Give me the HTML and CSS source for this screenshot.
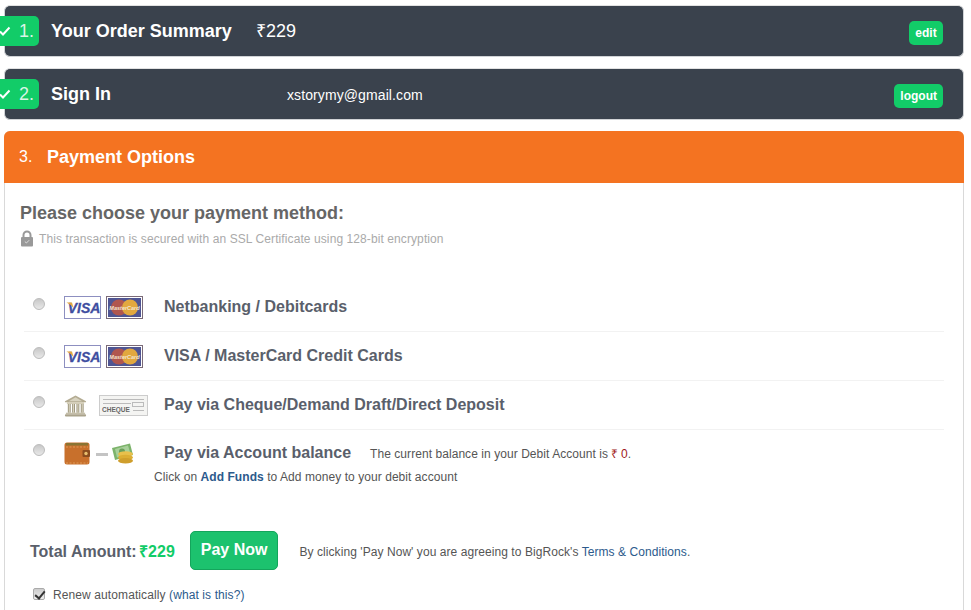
FILE: index.html
```html
<!DOCTYPE html>
<html lang="en">
<head>
  <meta charset="UTF-8">
  <title>Checkout</title>
  <link rel="stylesheet" href="styles.css">
</head>
<body>

  <div class="bar">
    <div class="step">
      <svg class="tick" width="12" height="10" viewBox="0 0 12 10"><path d="M1 5.5 L4 8.5 L10.5 1.5" fill="none" stroke="#fff" stroke-width="2"/></svg>
      <span>1.</span>
    </div>
    <div class="bar-title">Your Order Summary</div>
    <div class="bar-price">₹229</div>
    <a class="mini-btn">edit</a>
  </div>

  <div class="bar">
    <div class="step">
      <svg class="tick" width="12" height="10" viewBox="0 0 12 10"><path d="M1 5.5 L4 8.5 L10.5 1.5" fill="none" stroke="#fff" stroke-width="2"/></svg>
      <span>2.</span>
    </div>
    <div class="bar-title signin">Sign In</div>
    <div class="bar-mail">xstorymy@gmail.com</div>
    <a class="mini-btn">logout</a>
  </div>

  <div class="panel">
    <div class="panel-head">
      <span class="panel-num">3.</span>
      <span class="panel-title">Payment Options</span>
    </div>

    <div class="panel-body">
      <h2>Please choose your payment method:</h2>
      <div class="secure">
        <svg width="14" height="17" viewBox="0 0 14 17"><path d="M3.5 8 V5 a3.5 3.5 0 0 1 7 0 V8" fill="none" stroke="#999" stroke-width="2"/><rect x="1" y="7" width="12" height="9.5" rx="1" fill="#999"/><path d="M4.8 11.5 L6.4 13 L9.2 10.2" fill="none" stroke="#ddd" stroke-width="1"/></svg>
        <span>This transaction is secured with an SSL Certificate using 128-bit encryption</span>
      </div>

      <div class="methods">
        <div class="method">
          <input type="radio" name="pay" class="radio">
          <div class="logos">
            <svg class="card" width="37" height="23" viewBox="0 0 37 23"><rect x="0.5" y="0.5" width="36" height="22" fill="#fff" stroke="#8d8fc0"/><text x="20" y="17" text-anchor="middle" class="visa-text">VISA</text><path d="M2.500 6.500 H8 L9.500 12 Q7 8.500 2.500 6.500z" fill="#e2a83f"/></svg>
            <svg class="card" width="37" height="23" viewBox="0 0 37 23"><rect x="0.5" y="0.5" width="36" height="22" fill="#fff" stroke="#7a6a78"/><rect x="2" y="2" width="33" height="19" fill="#4f5593"/><circle cx="13" cy="11.5" r="8" fill="#b0564f"/><circle cx="24" cy="11.500" r="8" fill="#e2a83f"/><text x="18.5" y="13.500" text-anchor="middle" class="mc-text">MasterCard</text></svg>
          </div>
          <div class="method-name">Netbanking / Debitcards</div>
        </div>

        <div class="method">
          <input type="radio" name="pay" class="radio">
          <div class="logos">
            <svg class="card" width="37" height="23" viewBox="0 0 37 23"><rect x="0.5" y="0.5" width="36" height="22" fill="#fff" stroke="#8d8fc0"/><text x="20" y="17" text-anchor="middle" class="visa-text">VISA</text><path d="M2.500 6.500 H8 L9.500 12 Q7 8.500 2.500 6.500z" fill="#e2a83f"/></svg>
            <svg class="card" width="37" height="23" viewBox="0 0 37 23"><rect x="0.5" y="0.5" width="36" height="22" fill="#fff" stroke="#7a6a78"/><rect x="2" y="2" width="33" height="19" fill="#4f5593"/><circle cx="13" cy="11.5" r="8" fill="#b0564f"/><circle cx="24" cy="11.500" r="8" fill="#e2a83f"/><text x="18.5" y="13.500" text-anchor="middle" class="mc-text">MasterCard</text></svg>
          </div>
          <div class="method-name">VISA / MasterCard Credit Cards</div>
        </div>

        <div class="method">
          <input type="radio" name="pay" class="radio">
          <div class="logos">
            <svg width="23" height="23" viewBox="0 0 24 23">
              <path d="M12 1 L23 7 V8 H1 V7 Z" fill="#b3ab92"/>
              <path d="M12 3 L19 7 H5 Z" fill="#d8d3c0"/>
              <rect x="3" y="8" width="18" height="2" fill="#d2ccb6"/>
              <path d="M4 10h3v9H4z M8.5 10h3v9h-3z M13 10h3v9h-3z M17.500 10h3v9h-3z" fill="#9c957c"/>
              <path d="M5 10h1v9H5z M9.500 10h1v9h-1z M14 10h1v9h-1z M18.500 10h1v9h-1z" fill="#e0dbc8"/>
              <rect x="2" y="19" width="20" height="1.500" fill="#c4beA8"/>
              <rect x="1" y="20.500" width="22" height="2.500" rx="1" fill="#aaa38b"/>
            </svg>
            <span class="cheque">
              <i class="cheque-line l1"></i>
              <i class="cheque-line l2"></i>
              <i class="cheque-box"></i>
              <b>CHEQUE</b>
              <i class="cheque-line l3"></i>
            </span>
          </div>
          <div class="method-name">Pay via Cheque/Demand Draft/Direct Deposit</div>
        </div>

        <div class="method last">
          <input type="radio" name="pay" class="radio">
          <div class="logos">
            <svg width="26" height="23" viewBox="0 0 26 23">
              <rect x="0.500" y="0.500" width="25" height="22" rx="2.500" fill="#c8702c"/>
              <path d="M2 1 H24 V3.500 H2z" fill="#8a7433"/>
              <path d="M2 5 H24 M2 21 H24" stroke="#e8ac6c" stroke-dasharray="2 1.500" stroke-width="0.700"/>
              <rect x="18.500" y="8" width="7.500" height="7" rx="1" fill="#8a4c1e"/>
              <circle cx="22" cy="11.500" r="1.700" fill="#e8c070"/>
            </svg>
            <span class="dash"></span>
            <svg width="23" height="21" viewBox="0 0 23 21">
              <path d="M1 5 L19 0.500 L22 12 L4 17 Z" fill="#7cb36b"/>
              <path d="M4 6 L17 2.500 L19.500 11 L6 14.500 Z" fill="#a8d09a"/>
              <circle cx="11" cy="8.500" r="3" fill="#6a9f5a"/>
              <ellipse cx="14.500" cy="11" rx="7.500" ry="2.800" fill="#e8c04c"/>
              <ellipse cx="14.500" cy="14.500" rx="7.500" ry="2.800" fill="#dcae34"/>
              <ellipse cx="14.500" cy="17.800" rx="7.500" ry="2.800" fill="#cf9e2c"/>
            </svg>
          </div>
          <div class="method-name">Pay via Account balance</div>
          <div class="balance">The current balance in your Debit Account is <span class="rupee">₹ 0</span>.</div>
        </div>
        <div class="add-funds">Click on <a>Add Funds</a> to Add money to your debit account</div>
      </div>

      <div class="pay-row">
        <div class="total">Total Amount: <span>₹229</span></div>
        <a class="pay-btn">Pay Now</a>
        <div class="terms">By clicking 'Pay Now' you are agreeing to BigRock's <a>Terms &amp; Conditions</a>.</div>
      </div>

      <label class="renew">
        <input type="checkbox" checked>
        <span>Renew automatically <a>(what is this?)</a></span>
      </label>
    </div>
  </div>

</body>
</html>
```

FILE: styles.css
```css
* {
  box-sizing: border-box;
}
html, body {
  height: 610px;
  overflow: hidden;
}
body {
  margin: 0;
  padding: 5px 7px 0 4px;
  background: #fff;
  font-family: "Liberation Sans", Arial, sans-serif;
  color: #555;
}
a {
  color: #2c5a8c;
}
.bar {
  display: flex;
  align-items: center;
  height: 52px;
  margin-bottom: 11px;
  padding-right: 20px;
  background: #3a424d;
  border: 1px solid #d0d3d6;
  border-top-color: #e2e2e2;
  border-radius: 6px;
  color: #fff;
}
.step {
  display: flex;
  align-items: center;
  gap: 8px;
  width: 40px;
  height: 30px;
  margin-left: -6px;
  background: #12cc68;
  border-radius: 0 5px 5px 0;
  font-size: 18px;
  color: #d9f5e5;
  flex: none;
}
.tick {
  flex: none;
}
.bar-title {
  margin-left: 12px;
  width: 205px;
  font-size: 18px;
  font-weight: bold;
}
.bar-title.signin {
  width: 236px;
}
.bar-price {
  padding-bottom: 3px;
  font-size: 18px;
  flex: 1;
}
.bar-mail {
  padding-top: 2px;
  font-size: 14px;
  letter-spacing: .1px;
  flex: 1;
}
.mini-btn {
  margin-top: 4px;
  padding: 0 6px;
  min-width: 34px;
  background: #12cc68;
  border-radius: 5px;
  font-size: 12px;
  font-weight: bold;
  line-height: 24px;
  text-align: center;
  color: #fff;
}
.panel {
  height: 500px;
  border: 1px solid #d9d9d9;
  border-radius: 6px 6px 0 0;
  background: #fff;
}
.panel-head {
  display: flex;
  align-items: center;
  height: 52px;
  margin: -1px -1px 0;
  padding-left: 15px;
  background: #f47321;
  border-radius: 6px 6px 0 0;
  color: #fff;
}
.panel-num {
  width: 28px;
  font-size: 16px;
}
.panel-title {
  font-size: 18px;
  font-weight: bold;
}
.panel-body {
  padding: 20px 15px 0;
}
h2 {
  margin: 0;
  font-size: 18px;
  line-height: 20px;
  color: #666;
}
.secure {
  display: flex;
  align-items: center;
  gap: 5px;
  margin-top: 7px;
  font-size: 12px;
  letter-spacing: .09px;
  color: #aaa;
}
.methods {
  margin-top: 36px;
  padding: 0 4px;
}
.method {
  display: flex;
  align-items: center;
  height: 49px;
  border-bottom: 1px solid #f2f2f2;
}
.method.last {
  border-bottom: none;
  height: 46px;
}
.radio {
  appearance: none;
  flex: none;
  width: 12px;
  height: 12px;
  margin: -7px 0 0 9px;
  background: linear-gradient(#c8c8c8, #e8e8e8);
  border: 1px solid #bbb;
  border-radius: 50%;
}
.logos {
  display: flex;
  align-items: center;
  gap: 5px;
  width: 100px;
  margin-left: 19px;
  flex: none;
}
.card {
  flex: none;
}
.visa-text {
  font-family: "Liberation Sans", sans-serif;
  font-size: 14px;
  font-style: italic;
  font-weight: bold;
  fill: #3f4ea0;
  stroke: #3f4ea0;
  stroke-width: .3px;
}
.mc-text {
  font-family: "Liberation Sans", sans-serif;
  font-size: 5.5px;
  font-style: italic;
  font-weight: bold;
  fill: #f4e6d0;
}
.cheque {
  position: relative;
  display: block;
  flex: none;
  width: 49px;
  height: 21px;
  margin-left: 7px;
  background: #f4f4f2;
  border: 1px solid #ccc;
}
.cheque b {
  position: absolute;
  left: 2px;
  bottom: 1px;
  font-size: 6.5px;
  line-height: 8px;
  color: #666;
}
.cheque-line {
  position: absolute;
  height: 1px;
  background: #bbb;
}
.l1 {
  left: 3px;
  right: 3px;
  top: 3px;
}
.l2 {
  left: 3px;
  right: 16px;
  top: 7px;
}
.l3 {
  left: 33px;
  right: 3px;
  bottom: 4px;
}
.cheque-box {
  position: absolute;
  right: 3px;
  top: 6px;
  width: 12px;
  height: 5px;
  border: 1px solid #bbb;
}
.dash {
  flex: none;
  width: 12px;
  height: 3px;
  margin: 3px -2px 0 1px;
  background: #c4c4c4;
}
.method-name {
  font-size: 16px;
  font-weight: bold;
  color: #5a5f6b;
}
.balance {
  margin-left: 19px;
  font-size: 12px;
  letter-spacing: .06px;
  color: #555;
}
.rupee {
  margin-left: -1px;
  color: #a01818;
}
.add-funds {
  margin: -6px 0 0 130px;
  font-size: 12px;
  letter-spacing: .06px;
  color: #555;
}
.add-funds a {
  font-weight: bold;
}
.pay-row {
  display: flex;
  align-items: center;
  margin-top: 47px;
  padding-left: 10px;
}
.total {
  font-size: 16px;
  font-weight: bold;
  color: #5a5f6b;
}
.total span {
  margin-left: -2px;
  color: #12cc68;
}
.pay-btn {
  margin-left: 15px;
  padding: 9px 10px 10px;
  background: #1cc26e;
  border: 1px solid #14a55c;
  border-radius: 5px;
  font-size: 16px;
  font-weight: bold;
  color: #fff;
}
.terms {
  margin: 2px 0 0 21px;
  font-size: 12px;
  letter-spacing: .065px;
  color: #555;
}
.renew {
  display: flex;
  align-items: center;
  gap: 8px;
  margin-top: 18px;
  padding-left: 13px;
  font-size: 12px;
  letter-spacing: .1px;
  color: #555;
}
.renew input {
  appearance: none;
  position: relative;
  width: 12px;
  height: 12px;
  margin: -2px 0 0;
  background: linear-gradient(#ccc, #eee);
  border: 1px solid #aaa;
  border-radius: 2px;
}
.renew input:checked::after {
  content: "";
  position: absolute;
  left: 3px;
  top: 0;
  width: 4px;
  height: 8px;
  border: solid #333;
  border-width: 0 2px 2px 0;
  transform: rotate(40deg);
}
```
